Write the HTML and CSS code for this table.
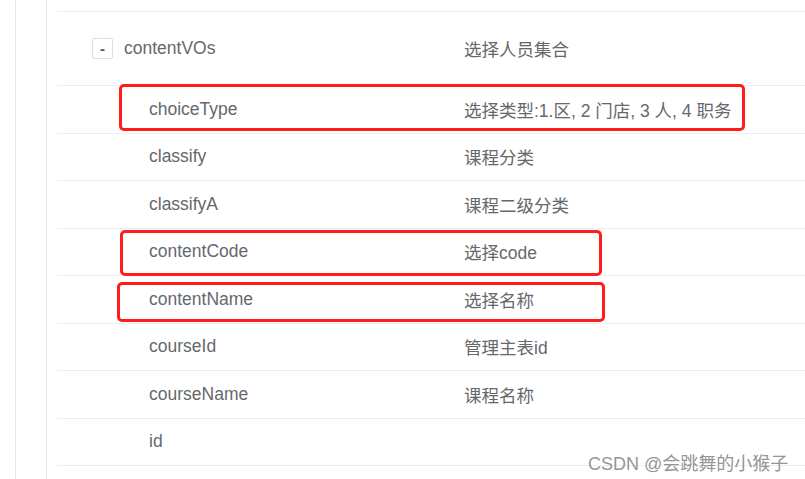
FILE: index.html
```html
<!DOCTYPE html>
<html lang="zh-CN">
<head>
<meta charset="utf-8">
<title>contentVOs</title>
<link rel="stylesheet" href="styles.css">
</head>
<body>
<div class="page">
  <div class="outer">
    <div class="inner">
      <div class="table">
        <div class="row row-parent">
          <div class="name"><span class="toggle">-</span><span>contentVOs</span></div>
          <div class="desc">选择人员集合</div>
        </div>
        <div class="row">
          <div class="name child">choiceType</div>
          <div class="desc">选择类型:1.区, 2 门店, 3 人, 4 职务</div>
        </div>
        <div class="row">
          <div class="name child">classify</div>
          <div class="desc">课程分类</div>
        </div>
        <div class="row">
          <div class="name child">classifyA</div>
          <div class="desc">课程二级分类</div>
        </div>
        <div class="row">
          <div class="name child">contentCode</div>
          <div class="desc">选择code</div>
        </div>
        <div class="row">
          <div class="name child">contentName</div>
          <div class="desc">选择名称</div>
        </div>
        <div class="row">
          <div class="name child">courseId</div>
          <div class="desc">管理主表id</div>
        </div>
        <div class="row">
          <div class="name child">courseName</div>
          <div class="desc">课程名称</div>
        </div>
        <div class="row">
          <div class="name child">id</div>
          <div class="desc"></div>
        </div>
      </div>
    </div>
  </div>
  <div class="mark mark-1"></div>
  <div class="mark mark-2"></div>
  <div class="mark mark-3"></div>
  <div class="watermark">CSDN @会跳舞的小猴子</div>
</div>
</body>
</html>
```
FILE: styles.css
```css
html, body {
  margin: 0;
  padding: 0;
  background: #fff;
  overflow: hidden;
}
body {
  width: 805px;
  height: 479px;
  font-family: "Liberation Sans", "Noto Sans CJK SC", sans-serif;
  font-size: 17.5px;
  color: #66686c;
}
.page {
  position: relative;
  height: 479px;
  padding-left: 15px;
  box-sizing: border-box;
}
.outer {
  height: 100%;
  border-left: 1px solid #e6e6e6;
  padding-left: 30px;
}
.inner {
  height: 100%;
  border-left: 1px solid #e6e6e6;
  padding-left: 10px;
  padding-top: 11px;
  box-sizing: border-box;
}
.table {
  width: 760px;
  border-top: 1px solid #ebeef5;
}
.row {
  display: grid;
  grid-template-columns: 407px 1fr;
  align-items: center;
  height: 46.5px;
  border-bottom: 1px solid #ebeef5;
}
.row-parent {
  height: 73px;
}
.name {
  display: flex;
  align-items: center;
  padding-left: 35px;
}
.name.child {
  padding-left: 92px;
}
.toggle {
  display: inline-flex;
  align-items: center;
  justify-content: center;
  width: 19px;
  height: 19px;
  border: 1px solid #dcdfe6;
  border-radius: 2px;
  margin-right: 11px;
  font-size: 15px;
  font-weight: bold;
  color: #555;
  line-height: 1;
}
.desc {
  white-space: nowrap;
}
.mark {
  position: absolute;
  border: 3px solid #ff1c1c;
  border-radius: 5px;
  box-sizing: border-box;
}
.mark-1 { left: 119px; top: 84px; width: 626px; height: 47px; }
.mark-2 { left: 120px; top: 230px; width: 482px; height: 46px; }
.mark-3 { left: 117px; top: 282px; width: 488px; height: 40px; }
.watermark {
  position: absolute;
  left: 588px;
  top: 449px;
  font-size: 18px;
  color: rgba(120, 120, 120, 0.8);
  white-space: nowrap;
}
```
